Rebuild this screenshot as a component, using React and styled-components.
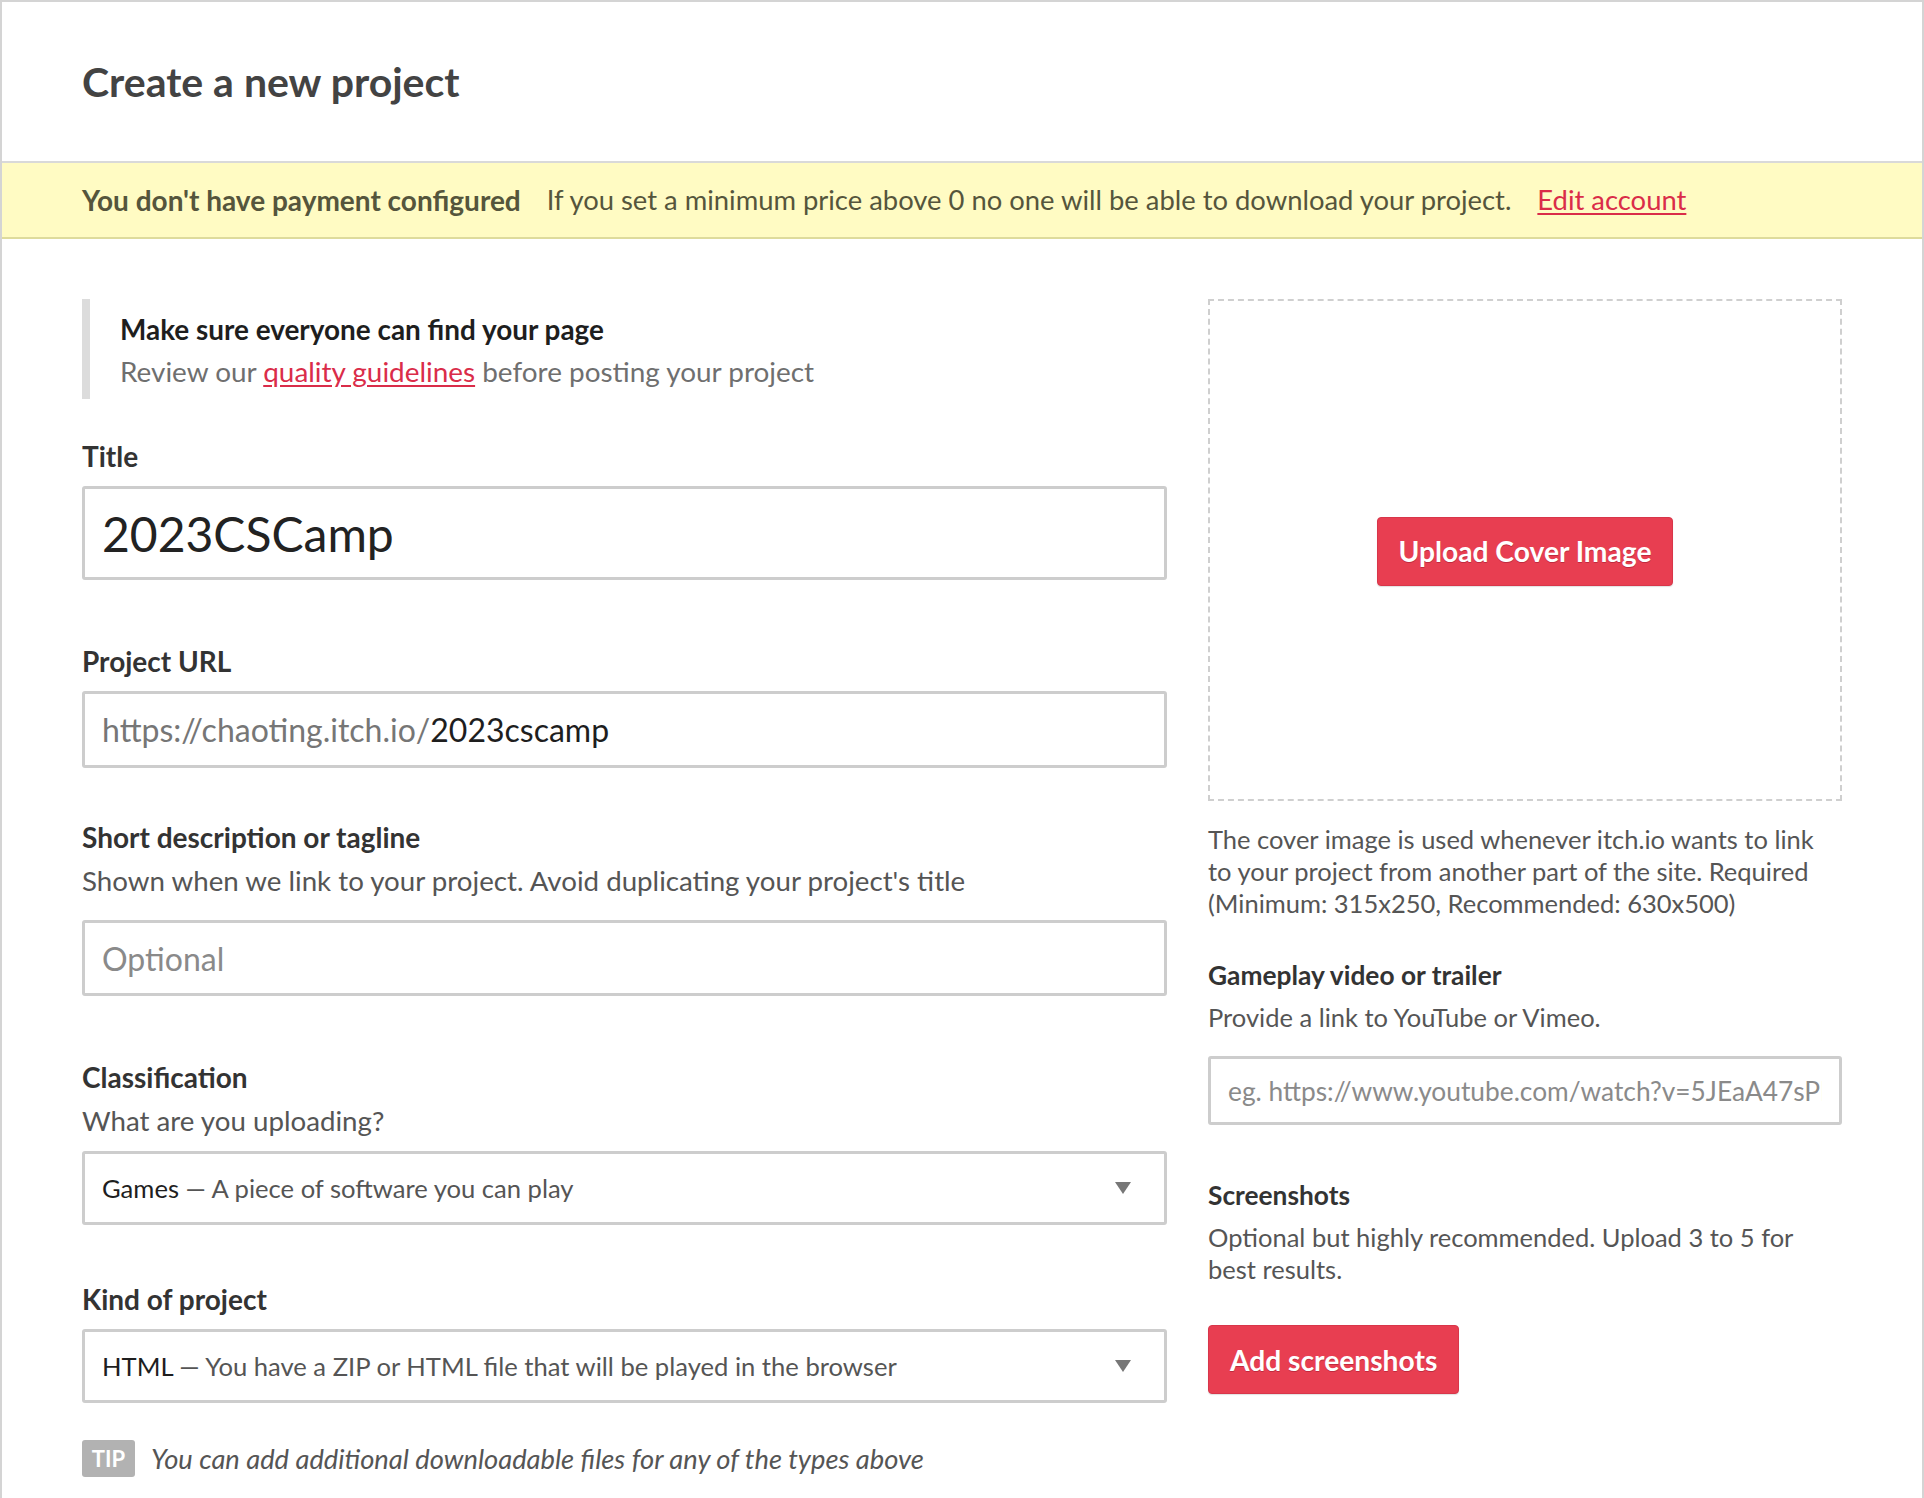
import React from "react";
import styled, { createGlobalStyle } from "styled-components";

const Global = createGlobalStyle`
  html, body { margin: 0; padding: 0; background: #fff; }
  body { font-family: Lato, "Noto Sans", sans-serif; color: #222; }
  * { box-sizing: border-box; }
`;

const Page = styled.div`
  width: 1924px;
  min-height: 1560px;
  border: 2px solid #d4d4d4;
  border-bottom: none;
  background: #fff;
`;

const Header = styled.div`
  padding: 56px 80px 55px;
`;

const PageTitle = styled.h2`
  margin: 0;
  font-size: 41px;
  line-height: 48px;
  font-weight: 700;
  color: #434343;
`;

const Banner = styled.div`
  display: flex;
  align-items: center;
  gap: 26px;
  padding: 20px 80px;
  background: #fffbc3;
  border-top: 2px solid #d9d9d9;
  border-bottom: 2px solid #dedb9c;
  color: #55553c;
  font-size: 27.4px;
  line-height: 34px;
`;

const BannerStrong = styled.strong`
  font-weight: 700;
  font-size: 28px;
`;

const Link = styled.a`
  color: #da2c49;
  text-decoration: underline;
  text-underline-offset: 3px;
`;

const Body = styled.div`
  display: grid;
  grid-template-columns: 1085px 634px;
  column-gap: 41px;
  padding: 60px 80px 80px;
  align-items: start;
`;

const Column = styled.div`
  display: flex;
  flex-direction: column;
  --label-size: ${(p) => (p.$side ? "26.3px" : "28px")};
  --sub-size: ${(p) => (p.$side ? "25.5px" : "27.7px")};
`;

const Notice = styled.div`
  border-left: 8px solid #dcdcdc;
  padding: 12px 0 10px 30px;
  margin-bottom: 40px;
`;

const NoticeTitle = styled.div`
  font-size: 27.9px;
  line-height: 36px;
  font-weight: 700;
  color: #1e1e1e;
  margin-bottom: 6px;
`;

const NoticeText = styled.div`
  font-size: 27.9px;
  line-height: 36px;
  color: #6f6f6f;
`;

const Field = styled.div`
  display: flex;
  flex-direction: column;
  margin-bottom: ${(p) => p.$after || 0}px;
`;

const Label = styled.div`
  font-size: var(--label-size);
  line-height: 34px;
  font-weight: 700;
  color: #333;
  margin-bottom: ${(p) => p.$gap ?? 13}px;
`;

const Sub = styled.div`
  font-size: var(--sub-size);
  line-height: 32px;
  color: #555;
  margin-bottom: ${(p) => p.$after || 0}px;
`;

const TextInput = styled.input`
  display: block;
  width: 100%;
  height: ${(p) => p.$h}px;
  border: 3px solid #cdcdcd;
  border-radius: 3px;
  padding: 0 ${(p) => p.$pad || 17}px;
  font-family: Lato, "Noto Sans", sans-serif;
  font-size: ${(p) => p.$size}px;
  color: #222;
  background: #fff;
  outline: none;
  &::placeholder { color: #8a8a8a; }
`;

const PrefixBox = styled.div`
  display: flex;
  align-items: center;
  height: 77px;
  border: 3px solid #cdcdcd;
  border-radius: 3px;
  padding: 0 17px;
  font-size: 32px;
  background: #fff;
  white-space: nowrap;
`;

const Prefix = styled.span`
  color: #767676;
`;

const PrefixValue = styled.span`
  color: #1e1e1e;
`;

const SelectBox = styled.div`
  display: flex;
  align-items: center;
  justify-content: space-between;
  height: 74px;
  border: 3px solid #cdcdcd;
  border-radius: 3px;
  padding: 0 33px 0 17px;
  font-size: 25.6px;
  color: #555;
  background: #fff;
`;

const SelectMain = styled.span`
  color: #1e1e1e;
`;

const Caret = styled.span`
  width: 0;
  height: 0;
  border-left: 8px solid transparent;
  border-right: 8px solid transparent;
  border-top: 12px solid #777;
  margin-top: 0;
`;

const Tip = styled.div`
  display: flex;
  align-items: center;
  gap: 16px;
  font-size: 27.3px;
  font-style: italic;
  color: #555;
`;

const TipBadge = styled.span`
  display: inline-flex;
  align-items: center;
  justify-content: center;
  width: 53px;
  height: 37px;
  background: #b2b2b2;
  border-radius: 3px;
  color: #fff;
  font-style: normal;
  font-weight: 700;
  font-size: 22px;
`;

const CoverDrop = styled.div`
  height: 502px;
  border: 2px dashed #cfcfcf;
  display: flex;
  align-items: center;
  justify-content: center;
  margin-bottom: 22px;
  padding-top: 2px;
`;

const RedButton = styled.button`
  display: inline-flex;
  align-items: center;
  justify-content: center;
  align-self: ${(p) => (p.$start ? "flex-start" : "auto")};
  height: 69px;
  padding: 0 ${(p) => p.$pad}px;
  background: #e83e51;
  border: 1px solid #d8364a;
  border-radius: 4px;
  color: #fff;
  font-family: Lato, "Noto Sans", sans-serif;
  font-size: 28.2px;
  font-weight: 700;
  text-shadow: 0 1px 0 #c02a3e;
  box-shadow: 0 1px 1px rgba(0, 0, 0, 0.12);
  cursor: pointer;
`;

export default function App() {
  return (
    <>
      <Global />
      <Page>
        <Header>
          <PageTitle>Create a new project</PageTitle>
        </Header>
        <Banner>
          <BannerStrong>You don't have payment configured</BannerStrong>
          <span>If you set a minimum price above 0 no one will be able to download your project.</span>
          <Link href="#">Edit account</Link>
        </Banner>
        <Body>
          <Column>
            <Notice>
              <NoticeTitle>Make sure everyone can find your page</NoticeTitle>
              <NoticeText>
                Review our <Link href="#">quality guidelines</Link> before posting your project
              </NoticeText>
            </Notice>

            <Field $after={64}>
              <Label>Title</Label>
              <TextInput $h={94} $size={48} defaultValue="2023CSCamp" />
            </Field>

            <Field $after={52}>
              <Label>Project URL</Label>
              <PrefixBox>
                <Prefix>https://chaoting.itch.io/</Prefix>
                <PrefixValue>2023cscamp</PrefixValue>
              </PrefixBox>
            </Field>

            <Field $after={64}>
              <Label $gap={11}>Short description or tagline</Label>
              <Sub $after={23}>Shown when we link to your project. Avoid duplicating your project's title</Sub>
              <TextInput $h={76} $size={32} placeholder="Optional" />
            </Field>

            <Field $after={57}>
              <Label $gap={11}>Classification</Label>
              <Sub $after={14}>What are you uploading?</Sub>
              <SelectBox>
                <span>
                  <SelectMain>Games</SelectMain> — A piece of software you can play
                </span>
                <Caret />
              </SelectBox>
            </Field>

            <Field $after={37}>
              <Label>Kind of project</Label>
              <SelectBox>
                <span>
                  <SelectMain>HTML</SelectMain> — You have a ZIP or HTML file that will be played in the browser
                </span>
                <Caret />
              </SelectBox>
            </Field>

            <Tip>
              <TipBadge>TIP</TipBadge>
              You can add additional downloadable files for any of the types above
            </Tip>
          </Column>

          <Column $side>
            <CoverDrop>
              <RedButton $pad={21}>Upload Cover Image</RedButton>
            </CoverDrop>
            <Sub $after={39}>
              The cover image is used whenever itch.io wants to link to your project from another part of the site. Required (Minimum: 315x250, Recommended: 630x500)
            </Sub>

            <Field $after={53}>
              <Label $gap={9}>Gameplay video or trailer</Label>
              <Sub $after={23}>Provide a link to YouTube or Vimeo.</Sub>
              <TextInput $h={69} $size={26.3} $pad={17} placeholder="eg. https://www.youtube.com/watch?v=5JEaA47sPHs" />
            </Field>

            <Field $after={40}>
              <Label $gap={9}>Screenshots</Label>
              <Sub>Optional but highly recommended. Upload 3 to 5 for best results.</Sub>
            </Field>

            <RedButton $start $pad={21}>Add screenshots</RedButton>
          </Column>
        </Body>
      </Page>
    </>
  );
}
